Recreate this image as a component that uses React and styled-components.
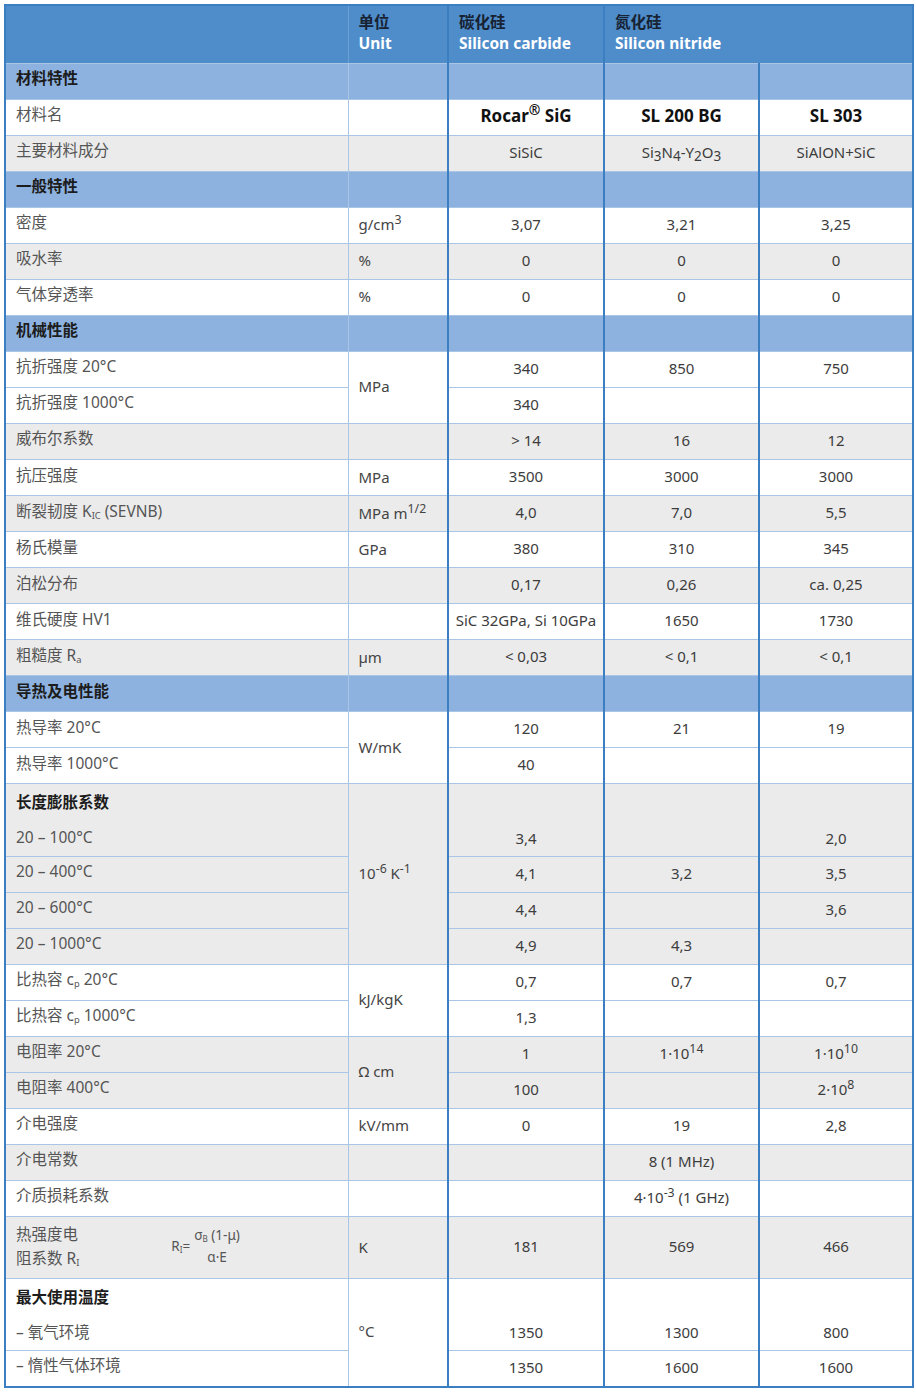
import React from 'react';
import styled, { createGlobalStyle, css } from 'styled-components';

const GlobalStyle = createGlobalStyle`
  body {
    margin: 0;
    background: #fff;
    font-family: "Noto Sans", "Noto Sans CJK SC", sans-serif;
  }
`;

const BLUE = '#3b7ec2';
const LINE = '#a9c6e6';

const Page = styled.div`
  padding: 4px;
`;

const Table = styled.table`
  width: 908px;
  table-layout: fixed;
  border-collapse: collapse;
  border: 2px solid ${BLUE};
  font-size: 15px;
  color: #3d3d3d;
`;

const HeadRow = styled.tr`
  height: 58px;
  background: #4e8cca;
`;

const HeadCell = styled.th`
  text-align: left;
  vertical-align: top;
  padding: 6px 10px 0;
  font-weight: 700;
  font-size: 15.5px;
  line-height: 21px;
  border-left: ${p => (p.$thick ? `2px solid ${BLUE}` : `1px solid #6fa0d4`)};
  border-bottom: 1px solid ${LINE};
`;

const HeadCn = styled.div`
  color: #172233;
`;

const HeadEn = styled.div`
  color: #fff;
`;

const tones = {
  white: '#ffffff',
  gray: '#ebebeb',
  section: '#8db2df',
};

const Row = styled.tr`
  height: ${p => p.$height}px;
  background: ${p => tones[p.$tone]};
`;

const cellBase = css`
  border-bottom: 1px solid ${LINE};
  line-height: 20px;
  padding: 0;
  vertical-align: middle;
`;

const LabelCell = styled.td`
  ${cellBase};
  padding: 0 10px 6px;
  font-size: 15.5px;
  color: #555;
  text-align: left;
  font-weight: ${p => (p.$bold ? 700 : 400)};
  ${p => p.$bold && 'color: #1c1c1c;'}
`;

const UnitCell = styled.td`
  ${cellBase};
  padding: 0 8px 2px 10px;
  border-left: 1px solid ${LINE};
  color: #444;
  text-align: left;
`;

const ValueCell = styled.td`
  ${cellBase};
  padding-bottom: 3px;
  border-left: 2px solid ${BLUE};
  text-align: center;
  white-space: nowrap;
  font-weight: ${p => (p.$bold ? 700 : 400)};
  font-size: ${p => (p.$bold ? '17px' : '15px')};
  color: ${p => (p.$bold ? '#111' : '#3d3d3d')};
  ${p => p.$bottom && css`
    vertical-align: bottom;
    padding-bottom: 8px;
  `}
`;

const Sup = styled.sup`
  font-size: 0.82em;
  line-height: 0;
  vertical-align: 0.5em;
`;

const Sub = styled.sub`
  font-size: 0.6em;
  line-height: 0;
  vertical-align: -0.25em;
`;

const Chem = styled.sub`
  font-size: 0.9em;
  line-height: 0;
  vertical-align: -0.2em;
`;

const LabelLine = styled.div`
  height: 35px;
  display: flex;
  align-items: center;
  font-weight: ${p => (p.$bold ? 700 : 400)};
  color: ${p => (p.$bold ? '#1c1c1c' : '#555')};
`;

const FormulaLabel = styled.div`
  display: flex;
  align-items: center;
  gap: 92px;
`;

const TwoLines = styled.div`
  line-height: 24px;
`;

const Formula = styled.div`
  display: flex;
  align-items: center;
  gap: 4px;
  font-size: 13.5px;
  color: #555;
`;

const Fraction = styled.div`
  display: flex;
  flex-direction: column;
  align-items: center;
  line-height: 22px;
`;

const SKIP = 'skip';

const rows = [
  { section: '材料特性' },
  {
    tone: 'white', label: '材料名', bold: true,
    values: [<>Rocar<Sup>®</Sup> SiG</>, 'SL 200 BG', 'SL 303'],
  },
  {
    tone: 'gray', label: '主要材料成分',
    values: ['SiSiC', <>Si<Chem>3</Chem>N<Chem>4</Chem>-Y<Chem>2</Chem>O<Chem>3</Chem></>, 'SiAlON+SiC'],
  },
  { section: '一般特性' },
  { tone: 'white', label: '密度', unit: <>g/cm<Sup>3</Sup></>, values: ['3,07', '3,21', '3,25'] },
  { tone: 'gray', label: '吸水率', unit: '%', values: ['0', '0', '0'] },
  { tone: 'white', label: '气体穿透率', unit: '%', values: ['0', '0', '0'] },
  { section: '机械性能' },
  { tone: 'white', label: '抗折强度 20°C', unit: 'MPa', span: 2, values: ['340', '850', '750'] },
  { tone: 'white', label: '抗折强度 1000°C', unit: SKIP, values: ['340', '', ''] },
  { tone: 'gray', label: '威布尔系数', values: ['> 14', '16', '12'] },
  { tone: 'white', label: '抗压强度', unit: 'MPa', values: ['3500', '3000', '3000'] },
  {
    tone: 'gray', label: <>断裂韧度 K<Sub>IC</Sub> (SEVNB)</>,
    unit: <>MPa m<Sup>1/2</Sup></>, values: ['4,0', '7,0', '5,5'],
  },
  { tone: 'white', label: '杨氏模量', unit: 'GPa', values: ['380', '310', '345'] },
  { tone: 'gray', label: '泊松分布', values: ['0,17', '0,26', 'ca. 0,25'] },
  { tone: 'white', label: '维氏硬度 HV1', values: ['SiC 32GPa, Si 10GPa', '1650', '1730'] },
  { tone: 'gray', label: <>粗糙度 R<Sub>a</Sub></>, unit: 'µm', values: ['< 0,03', '< 0,1', '< 0,1'] },
  { section: '导热及电性能' },
  { tone: 'white', label: '热导率 20°C', unit: 'W/mK', span: 2, values: ['120', '21', '19'] },
  { tone: 'white', label: '热导率 1000°C', unit: SKIP, values: ['40', '', ''] },
  {
    tone: 'gray', title: '长度膨胀系数', label: '20 – 100°C',
    unit: <>10<Sup>-6</Sup> K<Sup>-1</Sup></>, span: 4, values: ['3,4', '', '2,0'],
  },
  { tone: 'gray', label: '20 – 400°C', unit: SKIP, values: ['4,1', '3,2', '3,5'] },
  { tone: 'gray', label: '20 – 600°C', unit: SKIP, values: ['4,4', '', '3,6'] },
  { tone: 'gray', label: '20 – 1000°C', unit: SKIP, values: ['4,9', '4,3', ''] },
  {
    tone: 'white', label: <>比热容 c<Sub>p</Sub> 20°C</>, unit: 'kJ/kgK', span: 2,
    values: ['0,7', '0,7', '0,7'],
  },
  { tone: 'white', label: <>比热容 c<Sub>p</Sub> 1000°C</>, unit: SKIP, values: ['1,3', '', ''] },
  {
    tone: 'gray', label: '电阻率 20°C', unit: 'Ω cm', span: 2,
    values: ['1', <>1·10<Sup>14</Sup></>, <>1·10<Sup>10</Sup></>],
  },
  { tone: 'gray', label: '电阻率 400°C', unit: SKIP, values: ['100', '', <>2·10<Sup>8</Sup></>] },
  { tone: 'white', label: '介电强度', unit: 'kV/mm', values: ['0', '19', '2,8'] },
  { tone: 'gray', label: '介电常数', values: ['', '8 (1 MHz)', ''] },
  { tone: 'white', label: '介质损耗系数', values: ['', <>4·10<Sup>-3</Sup> (1 GHz)</>, ''] },
  { tone: 'gray', formula: true, unit: 'K', values: ['181', '569', '466'] },
  {
    tone: 'white', title: '最大使用温度', label: '– 氧气环境', unit: '°C', span: 2,
    values: ['1350', '1300', '800'],
  },
  { tone: 'white', label: '– 惰性气体环境', unit: SKIP, values: ['1350', '1600', '1600'] },
];

const H = 36.05;

const renderLabel = row => {
  if (row.formula) {
    return (
      <LabelCell style={{ paddingTop: 2, paddingBottom: 6 }}>
        <FormulaLabel>
          <TwoLines>
            热强度电<br />阻系数 R<Sub>I</Sub>
          </TwoLines>
          <Formula>
            <span>R<Sub>I</Sub>=</span>
            <Fraction>
              <span>σ<Sub>B</Sub> (1-μ)</span>
              <span>α·E</span>
            </Fraction>
          </Formula>
        </FormulaLabel>
      </LabelCell>
    );
  }
  if (row.title) {
    return (
      <LabelCell style={{ paddingBottom: 0 }}>
        <LabelLine $bold>{row.title}</LabelLine>
        <LabelLine>{row.label}</LabelLine>
      </LabelCell>
    );
  }
  return <LabelCell>{row.label}</LabelCell>;
};

const App = () => (
  <Page>
    <GlobalStyle />
    <Table>
      <colgroup>
        <col style={{ width: 343 }} />
        <col style={{ width: 100 }} />
        <col style={{ width: 156 }} />
        <col style={{ width: 155 }} />
        <col style={{ width: 154 }} />
      </colgroup>
      <thead>
        <HeadRow>
          <HeadCell />
          <HeadCell>
            <HeadCn>单位</HeadCn>
            <HeadEn>Unit</HeadEn>
          </HeadCell>
          <HeadCell $thick>
            <HeadCn>碳化硅</HeadCn>
            <HeadEn>Silicon carbide</HeadEn>
          </HeadCell>
          <HeadCell $thick colSpan={2}>
            <HeadCn>氮化硅</HeadCn>
            <HeadEn>Silicon nitride</HeadEn>
          </HeadCell>
        </HeadRow>
      </thead>
      <tbody>
        {rows.map((row, i) => {
          if (row.section) {
            return (
              <Row key={i} $tone="section" $height={H}>
                <LabelCell $bold>{row.section}</LabelCell>
                <UnitCell />
                <ValueCell />
                <ValueCell />
                <ValueCell />
              </Row>
            );
          }
          const tall = !!row.title;
          const height = row.formula ? 62 : tall ? H * 2 : H;
          return (
            <Row key={i} $tone={row.tone} $height={height}>
              {renderLabel(row)}
              {row.unit !== SKIP && (
                <UnitCell rowSpan={row.span || 1}>{row.unit || ''}</UnitCell>
              )}
              {row.values.map((v, j) => (
                <ValueCell key={j} $bold={row.bold} $bottom={tall}>
                  {v}
                </ValueCell>
              ))}
            </Row>
          );
        })}
      </tbody>
    </Table>
  </Page>
);

export default App;
